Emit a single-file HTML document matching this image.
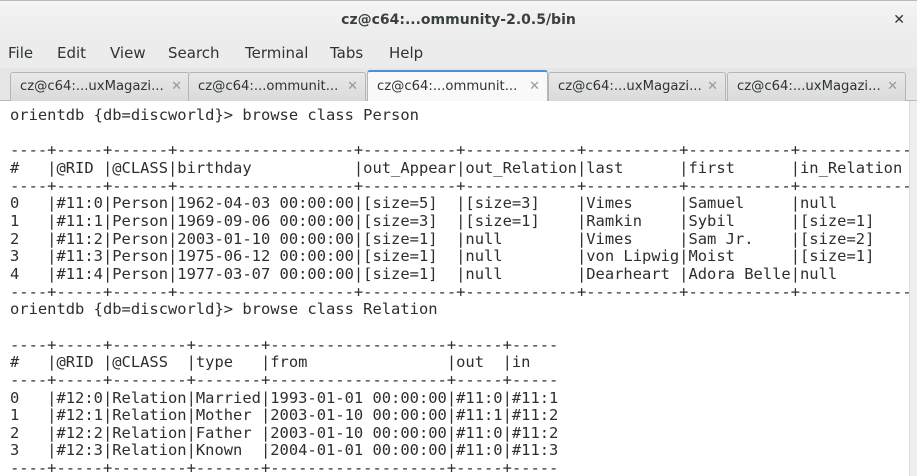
<!DOCTYPE html>
<html><head><meta charset="utf-8"><style>
body{margin:0;width:917px;height:476px;overflow:hidden;background:#ededed;font-family:"Liberation Sans","DejaVu Sans",sans-serif;position:relative}
.title{position:absolute;left:0;top:0;width:917px;height:38px;background:linear-gradient(#f4f4f4,#ececec);border-top:1px solid #bbb;box-sizing:border-box;text-align:center;font-size:14px;font-weight:bold;color:#3a3f41;line-height:38px;font-family:"DejaVu Sans",sans-serif}
.close{position:absolute;right:12px;top:0;font-size:14px;color:#333}
.menu{position:absolute;top:38px;left:0;height:30px;width:917px;background:#ececec;font-size:15px;color:#2e3436;line-height:30px;font-family:"DejaVu Sans",sans-serif}
.menu span{position:absolute}
.tabs{position:absolute;top:68px;left:0;width:917px;height:33px;background:#e6e6e6;border-bottom:1px solid #b8b8b8;box-sizing:border-box}
.tab{position:absolute;top:4px;height:29px;border:1px solid #b5b5b5;border-bottom:none;border-radius:3px 3px 0 0;background:linear-gradient(#e8e8e8,#dadada);box-sizing:border-box;font-size:13.2px;color:#2e3436;line-height:28px;padding-left:9px;font-family:"DejaVu Sans",sans-serif}
.tab.act{background:#f9f9f9;border-top:2px solid #4a90d9;top:2px;height:32px;line-height:30px}
.tab i{position:absolute;right:7px;top:0;font-style:normal;color:#999;font-size:13px}
.term{position:absolute;top:101px;left:0;width:910px;height:375px;background:#fff;overflow:hidden}
pre{margin:0;position:absolute;left:10px;top:6px;font-family:"DejaVu Sans Mono","Liberation Mono",monospace;font-size:15.45px;line-height:17.66px;color:#2e2e2e}
.sb{position:absolute;right:0;top:101px;width:7px;height:375px;background:#eee;border-left:1px solid #ddd}
</style></head><body>
<div class="title">cz@c64:...ommunity-2.0.5/bin<span class="close">✕</span></div>
<div class="menu"><span style="left:8px">File</span><span style="left:57px">Edit</span><span style="left:110px">View</span><span style="left:168px">Search</span><span style="left:245px">Terminal</span><span style="left:330px">Tabs</span><span style="left:389px">Help</span></div>
<div class="tabs">
<div class="tab" style="left:10px;width:180px">cz@c64:...uxMagazi...<i>✕</i></div>
<div class="tab" style="left:188px;width:178px">cz@c64:...ommunit...<i>✕</i></div>
<div class="tab act" style="left:367px;width:181px">cz@c64:...ommunit...<i>✕</i></div>
<div class="tab" style="left:548px;width:178px">cz@c64:...uxMagazi...<i>✕</i></div>
<div class="tab" style="left:727px;width:179px">cz@c64:...uxMagazi...<i>✕</i></div>
</div>
<div class="term"><pre>orientdb {db=discworld}&gt; browse class Person

----+-----+------+-------------------+----------+------------+----------+-----------+-------------
#   |@RID |@CLASS|birthday           |out_Appear|out_Relation|last      |first      |in_Relation
----+-----+------+-------------------+----------+------------+----------+-----------+-------------
0   |#11:0|Person|1962-04-03 00:00:00|[size=5]  |[size=3]    |Vimes     |Samuel     |null
1   |#11:1|Person|1969-09-06 00:00:00|[size=3]  |[size=1]    |Ramkin    |Sybil      |[size=1]
2   |#11:2|Person|2003-01-10 00:00:00|[size=1]  |null        |Vimes     |Sam Jr.    |[size=2]
3   |#11:3|Person|1975-06-12 00:00:00|[size=1]  |null        |von Lipwig|Moist      |[size=1]
4   |#11:4|Person|1977-03-07 00:00:00|[size=1]  |null        |Dearheart |Adora Belle|null
----+-----+------+-------------------+----------+------------+----------+-----------+-------------
orientdb {db=discworld}&gt; browse class Relation

----+-----+--------+-------+-------------------+-----+-----
#   |@RID |@CLASS  |type   |from               |out  |in
----+-----+--------+-------+-------------------+-----+-----
0   |#12:0|Relation|Married|1993-01-01 00:00:00|#11:0|#11:1
1   |#12:1|Relation|Mother |2003-01-10 00:00:00|#11:1|#11:2
2   |#12:2|Relation|Father |2003-01-10 00:00:00|#11:0|#11:2
3   |#12:3|Relation|Known  |2004-01-01 00:00:00|#11:0|#11:3
----+-----+--------+-------+-------------------+-----+-----</pre></div>
<div class="sb"></div>
</body></html>
